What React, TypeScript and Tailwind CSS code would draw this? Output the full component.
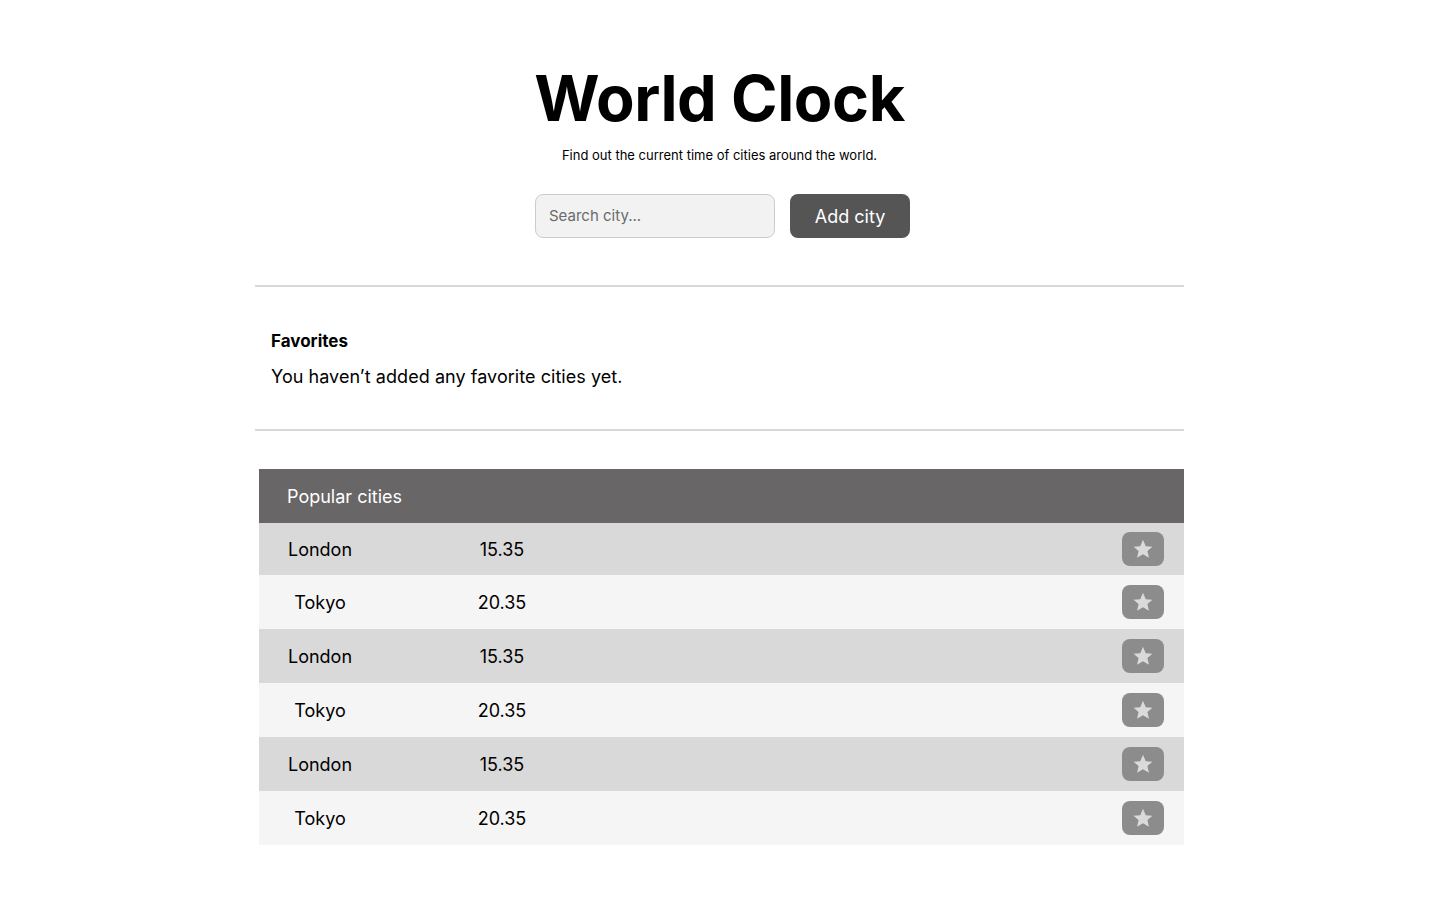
import React, { useState } from "react";

const cities = [
  { name: "London", time: "15.35" },
  { name: "Tokyo", time: "20.35" },
  { name: "London", time: "15.35" },
  { name: "Tokyo", time: "20.35" },
  { name: "London", time: "15.35" },
  { name: "Tokyo", time: "20.35" },
];

const Star = () => (
  <svg width="22" height="22" viewBox="0 0 24 24" fill="#dadada">
    <path d="M12 2l3 6.9 7.3.6-5.5 4.8 1.7 7.2L12 17.6l-6.5 3.9 1.7-7.2-5.5-4.8 7.3-.6z" />
  </svg>
);

const App = () => {
  const [query, setQuery] = useState("");

  return (
    <main className="min-h-screen bg-white text-black font-['Inter',sans-serif]">
      <div className="w-[929px] ml-[255px] pt-[60px]">
        <header className="flex flex-col items-center">
          <h1 className="text-[63px] font-bold leading-[76px] tracking-[-0.4px]">World Clock</h1>
          <p className="text-[13px] mt-[10px]">Find out the current time of cities around the world.</p>
          <div className="flex gap-[15px] mt-[28px] pl-[6px]">
            <input
              value={query}
              onChange={(e) => setQuery(e.target.value)}
              placeholder="Search city..."
              className="w-[240px] h-[44px] rounded-[8px] border border-[#cccccc] bg-[#f2f2f2] px-[13px] text-[15px] placeholder:text-[#6b6b6b] outline-none"
            />
            <button className="w-[120px] h-[44px] rounded-[8px] bg-[#555555] text-white text-[18px] pt-[2px]">
              Add city
            </button>
          </div>
        </header>

        <section className="mt-[47px] border-t-2 border-b-2 border-[#d9d9d9] px-[16px] pt-[42px] pb-[40px]">
          <h2 className="text-[17px] font-bold leading-[24px]">Favorites</h2>
          <p className="text-[18px] leading-[24px] mt-[12px] tracking-[0.05px]">You haven’t added any favorite cities yet.</p>
        </section>

        <div className="mt-[38px] ml-[4px]">
          <div className="h-[54px] bg-[#686667] flex items-center pt-[2px] px-[28px] text-white text-[18px]">
            Popular cities
          </div>
          {cities.map((c, i) => (
            <div
              key={i}
              className={`flex items-center pr-[20px] text-[18px] ${i === 0 ? "h-[52px]" : "h-[54px]"} ${i % 2 === 0 ? "bg-[#d9d9d9]" : "bg-[#f5f5f5]"}`}
            >
              <span className="w-[122px] text-center pt-[1px]">{c.name}</span>
              <span className="w-[242px] text-center pt-[1px]">{c.time}</span>
              <button className="ml-auto w-[42px] h-[34px] rounded-[8px] bg-[#8c8c8c] flex items-center justify-center">
                <Star />
              </button>
            </div>
          ))}
        </div>
      </div>
    </main>
  );
};

export default App;
